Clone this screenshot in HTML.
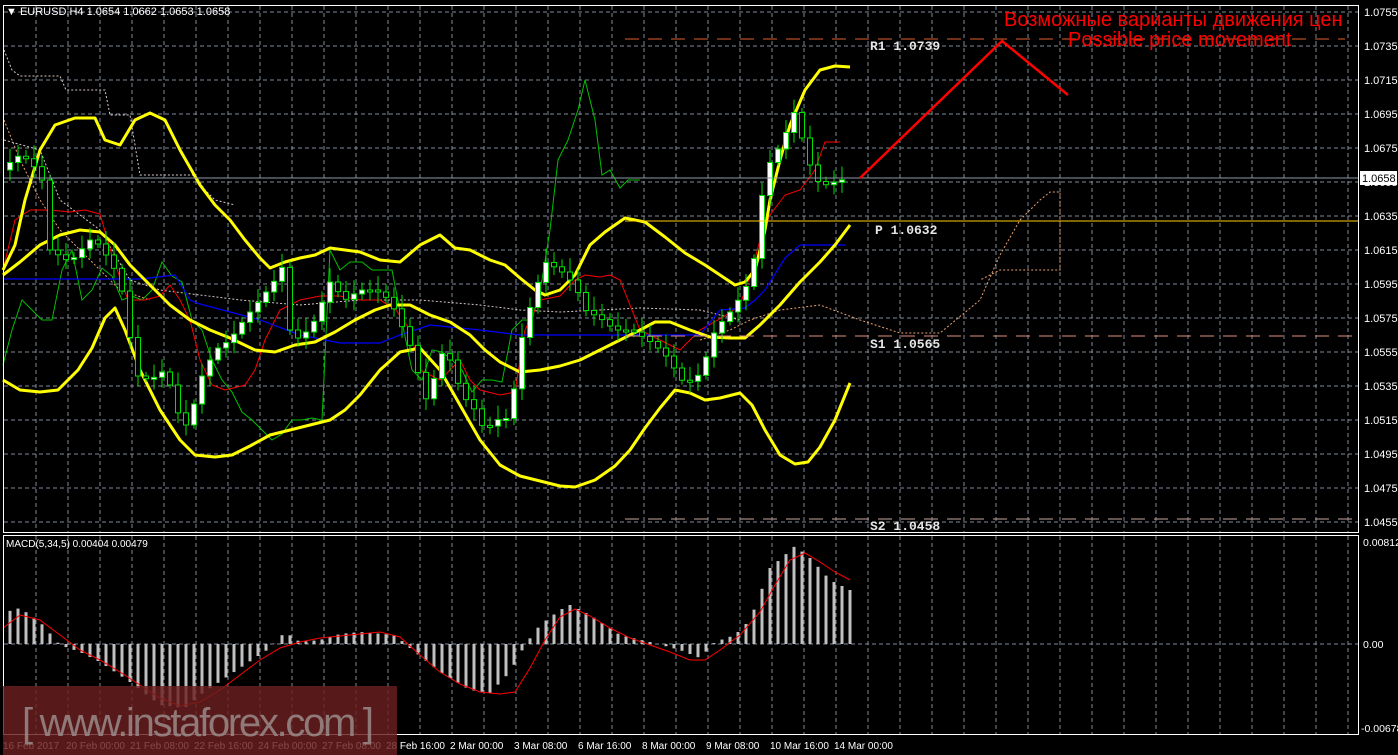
<!DOCTYPE html>
<html><head><meta charset="utf-8"><style>
html,body{margin:0;padding:0;background:#000;width:1398px;height:755px;overflow:hidden}
svg{display:block;font-family:"Liberation Sans",sans-serif}
</style></head><body>
<svg id="s" width="1398" height="755" viewBox="0 0 1398 755" xmlns="http://www.w3.org/2000/svg">
<rect width="1398" height="755" fill="#000"/>
<g id="grid" stroke="#7f8a99" stroke-width="1" stroke-dasharray="4,3"></g>
<g id="cloud" stroke-dasharray="2,2" stroke-width="1" fill="none">
<polyline stroke="#d9c8c8" points="4,50 12,70 20,76 60,76 66,90 105,90 110,115 130,115 140,175 195,175 205,190 215,200 235,205"/>
<polyline stroke="#d9c8c8" points="4,140 40,150 60,200 100,230 130,280 160,290 200,295 240,300 300,305 360,300 420,300 480,305 520,310 560,312 600,310 640,308 700,310 740,320"/>
<polyline stroke="#e8a070" points="4,120 20,160 40,200 60,230 90,260 120,290 150,300"/>
<polyline stroke="#e8a070" points="700,340 730,330 750,320 780,310 820,305 860,320 900,333 940,333 980,300 1000,255 1020,220 1040,200 1050,192 1060,192 1060,270 1000,270 980,280"/>
</g>
<polyline fill="none" stroke="#00c000" stroke-width="1" points="3,365 12,330 22,300 32,310 42,320 52,320 62,270 72,250 82,300 92,290 102,268 112,276 122,300 132,296 142,300 152,290 162,262 172,276 182,282 192,320 202,330 212,360 222,380 232,392 242,412 252,420 262,430 272,440 282,434 292,420 302,420 312,418 322,420 330,250 340,270 350,262 362,262 372,270 392,270 402,322 412,370 422,380 432,350 442,352 452,360 462,370 472,392 482,380 492,380 502,382 512,330 522,320 532,320 542,280 550,230 558,160 568,140 578,110 585,80 595,120 602,175 610,170 620,188 628,180 640,180"/>
<polyline fill="none" stroke="#ff0000" stroke-width="1" points="3,270 15,220 30,210 50,210 70,212 85,210 100,214 112,255 128,300 145,300 160,296 170,285 180,300 190,320 200,360 212,385 225,390 245,385 255,370 265,340 280,310 300,300 320,296 340,296 360,300 380,300 396,310 410,330 420,370 440,380 460,360 470,380 480,390 500,395 515,392 525,330 540,300 560,296 575,280 585,275 600,277 610,275 620,280 628,300 640,330 660,340 680,350 700,330 725,316 740,305 752,270 760,240 770,215 785,195 800,190 815,170 825,142 840,142"/>
<polyline fill="none" stroke="#0000ff" stroke-width="1.2" points="3,279 140,279 175,275 190,300 200,304 260,320 300,335 325,340 340,343 380,343 400,335 430,325 480,330 520,335 565,335 600,335 640,335 700,335 720,310 745,308 755,300 765,290 785,258 800,245 845,245"/>
<g fill="none" stroke="#ffff00" stroke-width="3" stroke-linejoin="round">
<polyline points="3,270 15,245 25,200 40,150 55,125 75,118 95,118 105,140 120,145 135,120 150,113 165,120 180,150 200,185 215,205 230,220 245,240 260,258 270,268 285,262 300,258 315,255 330,248 345,250 360,252 380,260 400,262 420,245 440,235 455,248 470,250 490,260 505,265 520,278 535,290 545,295 560,290 575,275 590,245 605,232 625,218 645,222 665,237 685,253 705,265 720,275 735,285 745,282 755,270 765,230 770,200 780,160 790,125 805,90 820,70 835,66 850,67"/>
<polyline points="3,275 20,262 40,245 60,235 80,230 100,232 115,245 130,265 150,285 170,305 190,320 210,330 230,338 255,350 275,352 295,345 315,342 335,332 355,320 375,310 390,305 410,305 430,315 450,322 470,335 485,350 500,362 520,372 540,370 560,366 580,360 600,350 620,340 640,330 655,322 670,322 690,330 710,337 730,338 745,338 760,325 780,305 800,282 820,262 835,245 850,225"/>
<polyline points="3,380 20,390 40,392 58,390 78,370 92,348 105,318 115,308 125,330 140,370 160,410 180,440 195,455 215,457 232,455 250,446 270,435 290,430 310,425 330,420 345,410 360,395 380,370 400,352 420,348 440,370 460,405 480,440 500,465 520,476 540,481 560,486 575,487 595,480 615,466 630,450 645,428 660,408 675,390 690,393 705,400 720,398 740,393 752,405 765,430 780,455 795,464 808,462 820,447 835,420 850,383"/>
</g>
<g id="candles"></g>
<line x1="625" y1="39" x2="1345" y2="39" stroke="#e06030" stroke-width="1" stroke-dasharray="14,9"/>
<line x1="625" y1="221" x2="1358" y2="221" stroke="#ffcc00" stroke-width="1"/>
<line x1="625" y1="336" x2="1358" y2="336" stroke="#e09080" stroke-width="1" stroke-dasharray="14,9"/>
<line x1="625" y1="519" x2="1358" y2="519" stroke="#c8a8a0" stroke-width="1" stroke-dasharray="14,9"/>
<line x1="3" y1="178" x2="1358" y2="178" stroke="#8c98a8" stroke-width="1"/>
<g font-family="Liberation Mono, monospace" font-size="13" fill="#e6e6e6" font-weight="bold">
<text x="870" y="50">R1  1.0739</text>
<text x="875" y="234">P  1.0632</text>
<text x="870" y="348">S1  1.0565</text>
<text x="870" y="530">S2  1.0458</text>
</g>
<polyline points="860,178 1002,41 1068,95" fill="none" stroke="#ff0000" stroke-width="2.5"/>
<svg x="0" y="0" width="1358" height="60" overflow="hidden">
<text x="1004" y="26" font-size="20" fill="#ff0000">Возможные варианты движения цен</text>
<text x="1068" y="46" font-size="20" fill="#ff0000">Possible price movement</text>
</svg>
<g id="hist" fill="#c0c0c0"></g>
<polyline fill="none" stroke="#ff0000" stroke-width="1" points="3,628 20,615 40,620 60,635 80,650 100,660 120,672 140,685 160,698 180,706 200,702 220,690 240,675 260,660 280,648 300,642 320,638 340,636 360,634 380,632 400,637 420,655 440,672 460,684 480,692 500,694 515,692 530,668 545,640 560,617 575,609 590,616 610,628 630,638 650,645 670,652 690,660 705,660 720,650 740,635 760,612 775,585 790,560 805,553 820,562 835,572 850,580"/>
<text x="6" y="547" font-size="10" fill="#fff">MACD(5,34,5) 0.00404 0.00479</text>
<rect x="3.5" y="5.5" width="1355" height="527" fill="none" stroke="#fff" stroke-width="1"/>
<rect x="3.5" y="535.5" width="1355" height="199" fill="none" stroke="#fff" stroke-width="1"/>
<g id="ticks" font-size="11" fill="#fff"></g>
<rect x="1360" y="171" width="37" height="14" fill="#fff"/>
<text x="1362" y="182" font-size="11" fill="#000">1.0658</text>
<g font-size="10.5" fill="#fff">
<text x="1363" y="546">0.00812</text>
<text x="1363" y="648">0.00</text>
<text x="1361" y="732">-0.00678</text>
</g>
<g font-size="10" fill="#fff">
<text x="3" y="749">16 Feb 2017</text><text x="66" y="749">20 Feb 00:00</text><text x="130" y="749">21 Feb 08:00</text><text x="194" y="749">22 Feb 16:00</text><text x="258" y="749">24 Feb 00:00</text><text x="322" y="749">27 Feb 08:00</text><text x="386" y="749">28 Feb 16:00</text><text x="450" y="749">2 Mar 00:00</text><text x="514" y="749">3 Mar 08:00</text><text x="578" y="749">6 Mar 16:00</text><text x="642" y="749">8 Mar 00:00</text><text x="706" y="749">9 Mar 08:00</text><text x="770" y="749">10 Mar 16:00</text><text x="834" y="749">14 Mar 00:00</text>
</g>
<text x="6" y="15" font-size="11" fill="#fff">▼ EURUSD,H4  1.0654 1.0662 1.0653 1.0658</text>
<rect x="3" y="686" width="394" height="69" fill="#6a1f1f" opacity="0.82"/>
<text x="22" y="736" font-size="40" fill="#9a8a8a" opacity="0.85" textLength="352">[  www.instaforex.com ]</text>
</svg>
<script>
(function(){
var NS="http://www.w3.org/2000/svg";
function el(p,t,a){var e=document.createElementNS(NS,t);for(var k in a)e.setAttribute(k,a[k]);document.getElementById(p).appendChild(e);return e;}
for(var x=36;x<1358;x+=32){el("grid","line",{x1:x,y1:6,x2:x,y2:532});el("grid","line",{x1:x,y1:536,x2:x,y2:734});}
for(var i=0;i<16;i++){var y=12+i*34;el("grid","line",{x1:4,y1:y,x2:1358,y2:y});
 el("ticks","text",{x:1364,y:y+4}).textContent=(1.0755-i*0.002).toFixed(4);}
el("grid","line",{x1:4,y1:644,x2:1358,y2:644});
var path=[[6,170],[14,155],[30,160],[45,185],[50,250],[70,262],[90,240],[100,245],[115,270],[125,300],[135,375],[150,380],[165,370],[175,400],[182,430],[190,420],[200,380],[215,350],[230,340],[245,318],[260,300],[275,280],[285,262],[290,330],[300,340],[315,320],[330,282],[345,300],[360,290],[375,290],[390,300],[400,322],[412,350],[420,380],[428,405],[440,352],[450,360],[462,395],[475,410],[485,432],[495,420],[510,418],[520,345],[532,300],[545,262],[560,270],[575,285],[585,310],[600,318],[615,330],[630,330],[645,338],[655,345],[670,360],[680,380],[695,382],[705,360],[715,330],[730,312],[745,290],[755,255],[765,170],[775,155],[785,135],[795,110],[805,150],[815,180],[825,185],[835,182],[848,178]];
function interp(x){for(var i=1;i<path.length;i++){if(x<=path[i][0]){var a=path[i-1],b=path[i];return a[1]+(b[1]-a[1])*(x-a[0])/(b[0]-a[0]);}}return 178;}
var prev=interp(6);
for(var x=10;x<=848;x+=8){var c=interp(x);var o=prev;prev=c;
 var t0=Math.min(o,c),b0=Math.max(o,c);if(b0-t0<2)b0=t0+2;
 var w=(Math.abs(Math.sin(x*1.7))*10+4);
 el("candles","line",{x1:x,y1:t0-w,x2:x,y2:b0+w*0.8,stroke:"#00e000","stroke-width":1});
 el("candles","rect",{x:x-2.5,y:t0,width:5,height:b0-t0,fill:c<o?"#fff":"#000",stroke:"#00e000","stroke-width":1});}
var m=[[6,612],[20,608],[40,622],[60,645],[80,652],[100,662],[130,682],[160,705],[185,708],[200,695],[240,668],[270,648],[285,632],[300,642],[320,640],[340,634],[360,632],[395,635],[410,648],[440,672],[470,690],[490,693],[510,672],[525,645],[540,625],[560,610],[570,605],[590,615],[620,635],[650,642],[680,650],[700,658],[715,642],[735,635],[750,620],[770,568],[785,555],[795,546],[810,558],[830,580],[850,590]];
function im(x){for(var i=1;i<m.length;i++){if(x<=m[i][0]){var a=m[i-1],b=m[i];return a[1]+(b[1]-a[1])*(x-a[0])/(b[0]-a[0]);}}return 644;}
for(var x=10;x<=850;x+=8){var v=im(x);el("hist","rect",{x:x-1.5,y:Math.min(v,644),width:3,height:Math.abs(v-644)||1});}
})();
</script>
</body></html>
